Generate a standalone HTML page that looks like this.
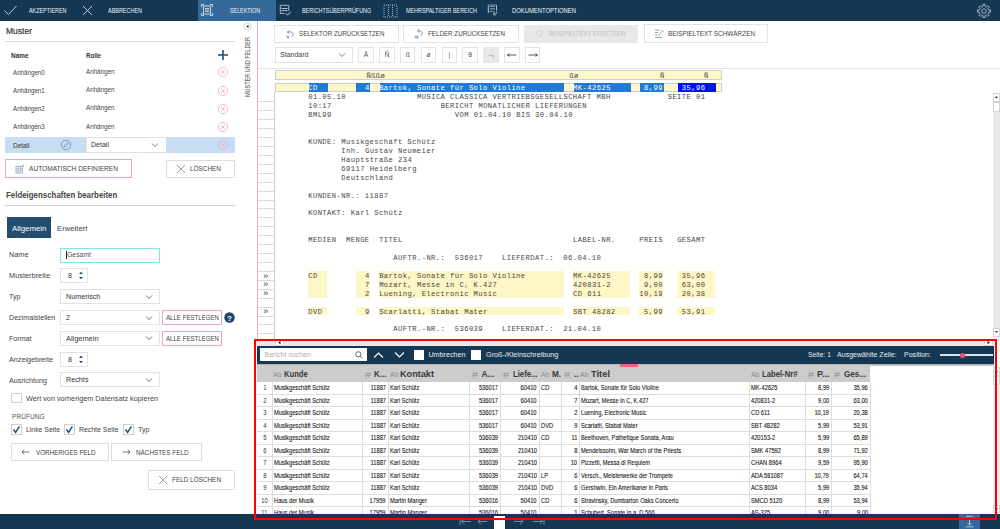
<!DOCTYPE html>
<html><head><meta charset="utf-8"><style>
html,body{margin:0;padding:0}
body{width:1000px;height:529px;overflow:hidden;position:relative;background:#fff;font-family:"Liberation Sans",sans-serif}
.a{position:absolute}
.t{white-space:pre;line-height:12px;height:12px}
.m{white-space:pre;line-height:12px;height:12px;font-family:"Liberation Mono",monospace;font-size:7.200px;letter-spacing:0.410px}
svg{overflow:visible}
</style></head><body>
<div class="a" style="left:0px;top:0px;width:1000px;height:20.5px;background:#143753"></div>
<div class="a" style="left:198px;top:0px;width:78px;height:20.5px;background:#356999"></div>
<svg class="a" style="left:3px;top:4px" width="15" height="12" viewBox="0 0 15 12"><path d="M1.5 6.5 L5.5 10.5 L13.5 2" fill="none" stroke="#d8dde3" stroke-width="0.9"/></svg>
<svg class="a" style="left:82px;top:5px" width="11" height="11" viewBox="0 0 11 11"><path d="M1 1 L10 10 M10 1 L1 10" fill="none" stroke="#d8dde3" stroke-width="0.9"/></svg>
<svg class="a" style="left:200px;top:3px" width="14" height="14" viewBox="0 0 14 14"><path d="M1.5 4 V1.5 H4 M10 1.5 H12.5 V4 M12.5 10 V12.5 H10 M4 12.5 H1.5 V10" fill="none" stroke="#dfe6ee" stroke-width="0.9"/><rect x="3.5" y="3" width="7" height="8" fill="none" stroke="#dfe6ee" stroke-width="0.9"/><path d="M5 5.5 H9 M5 7 H9 M5 8.5 H9" stroke="#dfe6ee" stroke-width="0.8"/></svg>
<svg class="a" style="left:278px;top:3px" width="15" height="14" viewBox="0 0 15 14"><path d="M2.3 2.3 H10.7 V8 M2.3 2.3 V10.5 H6.5" fill="none" stroke="#b9c3ce" stroke-width="0.9"/><path d="M3.5 5.5 H9.5 M3.5 7.6 H9.5" stroke="#c9d1da" stroke-width="0.9"/><path d="M7.5 10.3 L9.3 12.1 L12.8 9" fill="none" stroke="#d5dce4" stroke-width="0.9"/></svg>
<svg class="a" style="left:383px;top:3.5px" width="16" height="14" viewBox="0 0 16 14"><rect x="1" y="1" width="13" height="12" fill="none" stroke="#cfd6de" stroke-width="0.8" stroke-dasharray="1,1"/><path d="M5.5 1 V13 M9.5 1 V13" stroke="#cfd6de" stroke-width="0.8" stroke-dasharray="1,1"/></svg>
<svg class="a" style="left:486px;top:3px" width="14" height="14" viewBox="0 0 14 14"><path d="M2.3 2 V10 M10.5 2 V7.5" fill="none" stroke="#c5ced8" stroke-width="0.9"/><path d="M2.3 2 H10.5" stroke="#7f93a8" stroke-width="0.9"/><path d="M3.8 3.3 H9 M3.8 5.9 H9 M3.8 8.4 H6.5" stroke="#aab6c3" stroke-width="0.9"/><path d="M8 8 V10.5 M10.5 8.5 V10.5" stroke="#c5ced8" stroke-width="0.8"/><circle cx="8.5" cy="11.3" r="1" fill="none" stroke="#c5ced8" stroke-width="0.8"/></svg>
<svg class="a" style="left:976.5px;top:3.5px" width="14" height="14" viewBox="0 0 14 14"><path d="M5.24 2.75 L5.89 2.54 L5.97 0.48 L8.03 0.48 L8.11 2.54 L8.76 2.75 L9.37 3.06 L10.88 1.66 L12.34 3.12 L10.94 4.63 L11.25 5.24 L11.46 5.89 L13.52 5.97 L13.52 8.03 L11.46 8.11 L11.25 8.76 L10.94 9.37 L12.34 10.88 L10.88 12.34 L9.37 10.94 L8.76 11.25 L8.11 11.46 L8.03 13.52 L5.97 13.52 L5.89 11.46 L5.24 11.25 L4.63 10.94 L3.12 12.34 L1.66 10.88 L3.06 9.37 L2.75 8.76 L2.54 8.11 L0.48 8.03 L0.48 5.97 L2.54 5.89 L2.75 5.24 L3.06 4.63 L1.66 3.12 L3.12 1.66 L4.63 3.06 Z" fill="none" stroke="#cdd5de" stroke-width="0.8"/><circle cx="7" cy="7" r="2.2" fill="none" stroke="#cdd5de" stroke-width="0.8"/></svg>
<div class="a" style="left:5px;top:41px;width:230px;height:1px;background:#dcdcdc"></div>
<svg class="a" style="left:217px;top:49px" width="12" height="12" viewBox="0 0 12 12"><path d="M6 1 V11 M1 6 H11" stroke="#234d74" stroke-width="1.6"/></svg>
<svg class="a" style="left:217px;top:66.3px" width="12" height="12" viewBox="0 0 12 12"><circle cx="6" cy="6" r="4.6" fill="none" stroke="#f0a8b0" stroke-width="0.8"/><path d="M4 4 L8 8 M8 4 L4 8" stroke="#f0a8b0" stroke-width="0.8"/></svg>
<svg class="a" style="left:217px;top:84.6px" width="12" height="12" viewBox="0 0 12 12"><circle cx="6" cy="6" r="4.6" fill="none" stroke="#f0a8b0" stroke-width="0.8"/><path d="M4 4 L8 8 M8 4 L4 8" stroke="#f0a8b0" stroke-width="0.8"/></svg>
<svg class="a" style="left:217px;top:102.8px" width="12" height="12" viewBox="0 0 12 12"><circle cx="6" cy="6" r="4.6" fill="none" stroke="#f0a8b0" stroke-width="0.8"/><path d="M4 4 L8 8 M8 4 L4 8" stroke="#f0a8b0" stroke-width="0.8"/></svg>
<svg class="a" style="left:217px;top:121px" width="12" height="12" viewBox="0 0 12 12"><circle cx="6" cy="6" r="4.6" fill="none" stroke="#f0a8b0" stroke-width="0.8"/><path d="M4 4 L8 8 M8 4 L4 8" stroke="#f0a8b0" stroke-width="0.8"/></svg>
<div class="a" style="left:5px;top:137.3px;width:230px;height:15.8px;background:#c7ddf3"></div>
<svg class="a" style="left:60px;top:139px" width="12" height="12" viewBox="0 0 12 12"><circle cx="6" cy="6" r="4.7" fill="none" stroke="#6f8fb0" stroke-width="0.8"/><path d="M3.8 8.2 L4.2 6.8 L7.6 3.4 L8.6 4.4 L5.2 7.8 Z" fill="none" stroke="#6f8fb0" stroke-width="0.7"/></svg>
<div class="a" style="left:85.5px;top:137.3px;width:80.5px;height:15.8px;background:#fff;border:1px solid #e0e0e0;border-right:none;box-sizing:border-box"></div>
<svg class="a" style="left:151px;top:142px" width="8" height="6" viewBox="0 0 8 6"><path d="M1 1.5 L4 4.5 L7 1.5" fill="none" stroke="#555" stroke-width="0.8"/></svg>
<svg class="a" style="left:217px;top:139px" width="12" height="12" viewBox="0 0 12 12"><circle cx="6" cy="6" r="4.6" fill="none" stroke="#f0a8b0" stroke-width="0.8"/><path d="M4 4 L8 8 M8 4 L4 8" stroke="#f0a8b0" stroke-width="0.8"/></svg>
<div class="a" style="left:5px;top:159.3px;width:127px;height:19px;border:1px solid #f3a3b3;box-sizing:border-box;background:#fff"></div>
<svg class="a" style="left:15px;top:164px" width="10" height="10" viewBox="0 0 10 10"><rect x="1" y="2.5" width="6.5" height="6.5" fill="none" stroke="#8ea3ba" stroke-width="0.8"/><path d="M1 4.7 H7.5 M1 6.8 H7.5 M3.2 2.5 V9 M5.3 2.5 V9" stroke="#8ea3ba" stroke-width="0.6"/><path d="M8 0.5 V3 M6.8 1.7 H9.2" stroke="#8ea3ba" stroke-width="0.6"/></svg>
<div class="a" style="left:166px;top:159.5px;width:69px;height:18.8px;border:1px solid #dedede;box-sizing:border-box;background:#fff"></div>
<svg class="a" style="left:176px;top:163.5px" width="10" height="10" viewBox="0 0 10 10"><path d="M1 1 L9 9 M9 1 L1 9" stroke="#888" stroke-width="0.8"/></svg>
<div class="a" style="left:5px;top:205px;width:230px;height:1px;background:#d0d0d0"></div>
<div class="a" style="left:7px;top:217px;width:44px;height:20.8px;background:#224d6f"></div>
<div class="a" style="left:60px;top:247.5px;width:99.5px;height:15px;border:1px solid #80e4f2;box-sizing:border-box;background:#fff"></div>
<div class="a" style="left:66px;top:250.5px;width:0.8px;height:8.5px;background:#222"></div>
<div class="a" style="left:60px;top:268px;width:28.2px;height:15.2px;border:1px solid #e2e2e2;box-sizing:border-box;background:#fff"></div>
<svg class="a" style="left:78px;top:270px" width="6" height="11" viewBox="0 0 6 11"><path d="M1 4 L3 1.8 L5 4 Z M1 7 L3 9.2 L5 7 Z" fill="#1f4d79"/></svg>
<div class="a" style="left:60px;top:289px;width:99.5px;height:15.3px;border:1px solid #e2e2e2;box-sizing:border-box;background:#fff"></div>
<svg class="a" style="left:144.5px;top:293.8px" width="8" height="6" viewBox="0 0 8 6"><path d="M1 1.5 L4 4.5 L7 1.5" fill="none" stroke="#444" stroke-width="0.8"/></svg>
<div class="a" style="left:60px;top:310px;width:99.5px;height:15.3px;border:1px solid #e2e2e2;box-sizing:border-box;background:#fff"></div>
<svg class="a" style="left:144.5px;top:314.8px" width="8" height="6" viewBox="0 0 8 6"><path d="M1 1.5 L4 4.5 L7 1.5" fill="none" stroke="#444" stroke-width="0.8"/></svg>
<div class="a" style="left:60px;top:330.5px;width:99.5px;height:15.3px;border:1px solid #e2e2e2;box-sizing:border-box;background:#fff"></div>
<svg class="a" style="left:144.5px;top:335.3px" width="8" height="6" viewBox="0 0 8 6"><path d="M1 1.5 L4 4.5 L7 1.5" fill="none" stroke="#444" stroke-width="0.8"/></svg>
<div class="a" style="left:60px;top:351.5px;width:28.2px;height:15.2px;border:1px solid #e2e2e2;box-sizing:border-box;background:#fff"></div>
<svg class="a" style="left:78px;top:353.5px" width="6" height="11" viewBox="0 0 6 11"><path d="M1 4 L3 1.8 L5 4 Z M1 7 L3 9.2 L5 7 Z" fill="#1f4d79"/></svg>
<div class="a" style="left:60px;top:372.2px;width:99.5px;height:15.3px;border:1px solid #e2e2e2;box-sizing:border-box;background:#fff"></div>
<svg class="a" style="left:144.5px;top:377.0px" width="8" height="6" viewBox="0 0 8 6"><path d="M1 1.5 L4 4.5 L7 1.5" fill="none" stroke="#444" stroke-width="0.8"/></svg>
<div class="a" style="left:162px;top:310px;width:60px;height:15.2px;border:1px solid #f3a3b3;box-sizing:border-box;background:#fff"></div>
<div class="a" style="left:162px;top:330.8px;width:60px;height:15.2px;border:1px solid #f3a3b3;box-sizing:border-box;background:#fff"></div>
<svg class="a" style="left:223.5px;top:312px" width="11" height="11" viewBox="0 0 11 11"><circle cx="5.5" cy="5.5" r="5.2" fill="#1d466f"/><text x="5.5" y="8.6" text-anchor="middle" font-family="Liberation Sans" font-weight="bold" font-size="8" fill="#fff">?</text></svg>
<div class="a" style="left:11px;top:392.6px;width:10.5px;height:10.5px;border:1px solid #d0d0d0;box-sizing:border-box;background:#fff"></div>
<div class="a" style="left:11px;top:424.3px;width:10.5px;height:10.5px;border:1px solid #d0d0d0;box-sizing:border-box;background:#fff"></div>
<svg class="a" style="left:11px;top:424.3px" width="11" height="11" viewBox="0 0 11 11"><path d="M2.5 5.5 L4.6 8.4 L8.4 2.4" fill="none" stroke="#1f4d79" stroke-width="1.4"/></svg>
<div class="a" style="left:64px;top:424.3px;width:10.5px;height:10.5px;border:1px solid #d0d0d0;box-sizing:border-box;background:#fff"></div>
<svg class="a" style="left:64px;top:424.3px" width="11" height="11" viewBox="0 0 11 11"><path d="M2.5 5.5 L4.6 8.4 L8.4 2.4" fill="none" stroke="#1f4d79" stroke-width="1.4"/></svg>
<div class="a" style="left:123px;top:424.3px;width:10.5px;height:10.5px;border:1px solid #d0d0d0;box-sizing:border-box;background:#fff"></div>
<svg class="a" style="left:123px;top:424.3px" width="11" height="11" viewBox="0 0 11 11"><path d="M2.5 5.5 L4.6 8.4 L8.4 2.4" fill="none" stroke="#1f4d79" stroke-width="1.4"/></svg>
<div class="a" style="left:11.3px;top:443px;width:97.4px;height:18.4px;border:1px solid #dedede;box-sizing:border-box;background:#fff"></div>
<svg class="a" style="left:21px;top:449px" width="9" height="6" viewBox="0 0 9 6"><path d="M8.5 3 H1 M3.2 0.8 L1 3 L3.2 5.2" fill="none" stroke="#555" stroke-width="0.8"/></svg>
<div class="a" style="left:111.3px;top:443px;width:90.5px;height:18.4px;border:1px solid #dedede;box-sizing:border-box;background:#fff"></div>
<svg class="a" style="left:121.5px;top:449px" width="9" height="6" viewBox="0 0 9 6"><path d="M0.5 3 H8 M5.8 0.8 L8 3 L5.8 5.2" fill="none" stroke="#555" stroke-width="0.8"/></svg>
<div class="a" style="left:148.4px;top:470px;width:86.6px;height:19.5px;border:1px solid #dedede;box-sizing:border-box;background:#fff"></div>
<svg class="a" style="left:157.5px;top:475px" width="10" height="10" viewBox="0 0 10 10"><path d="M1 1 L9 9 M9 1 L1 9" stroke="#888" stroke-width="0.8"/></svg>
<svg class="a" style="left:242px;top:21.2px" width="11" height="11" viewBox="0 0 11 11"><circle cx="5.5" cy="5.5" r="3.5" fill="none" stroke="#c8c8c8" stroke-width="0.8"/><path d="M6.5 3.8 L4.2 5.5 L6.5 7.2 Z" fill="#333"/></svg>
<div class="a" style="left:242.8px;top:96.8px;width:72px;height:9px;transform-origin:0 0;transform:rotate(-90deg) scaleX(0.836);font:6.6px/9px 'Liberation Sans';color:#444;white-space:nowrap">MUSTER UND FELDER</div>
<div class="a" style="left:257px;top:21px;width:0.8px;height:318px;background:#f6a9b8"></div>
<div class="a" style="left:258px;top:68px;width:742px;height:1px;background:#e6e6e6"></div>
<div class="a" style="left:274px;top:24.5px;width:124.5px;height:18.3px;border:1px solid #e3e3e3;box-sizing:border-box;background:#fff"></div>
<svg class="a" style="left:285px;top:28.5px" width="10" height="11" viewBox="0 0 10 11"><path d="M2.5 3 H5.8 C8.6 3 9 6.6 6.6 7.6 M4.2 1.3 L2.4 3 L4.2 4.7" fill="none" stroke="#6d8aa8" stroke-width="0.9"/><path d="M1.6 6.6 L4.2 9.2 M4.2 6.6 L1.6 9.2" stroke="#6d8aa8" stroke-width="0.9"/></svg>
<div class="a" style="left:403px;top:24.5px;width:115.5px;height:18.3px;border:1px solid #e3e3e3;box-sizing:border-box;background:#fff"></div>
<svg class="a" style="left:414px;top:28px" width="10" height="11" viewBox="0 0 10 11"><path d="M3.5 3 H5.8 C8.6 3 9 6.6 6.6 7.6 M5.2 1.3 L3.4 3 L5.2 4.7" fill="none" stroke="#6d8aa8" stroke-width="0.9"/><rect x="0.8" y="7.6" width="3.6" height="3" fill="#9fb5ca"/></svg>
<div class="a" style="left:524px;top:24.5px;width:114px;height:18.3px;background:#e8e8e8"></div>
<svg class="a" style="left:534px;top:28px" width="10" height="11" viewBox="0 0 10 11"><circle cx="5" cy="5.5" r="3" fill="none" stroke="#c5c5c5" stroke-width="0.8" stroke-dasharray="2,1"/></svg>
<div class="a" style="left:644px;top:24.3px;width:124px;height:18.5px;border:1px solid #e3e3e3;box-sizing:border-box;background:#fff"></div>
<svg class="a" style="left:654px;top:28px" width="10" height="11" viewBox="0 0 10 11"><path d="M1 2 H6 M1 4.5 H4 M1 7 H3 M1 9.5 H8" stroke="#7f9cba" stroke-width="0.9"/><path d="M4 8 L8.5 3 M7.5 2 L9.5 4" stroke="#7f9cba" stroke-width="0.8"/></svg>
<div class="a" style="left:275px;top:47px;width:77.5px;height:15.6px;border:1px solid #e3e3e3;box-sizing:border-box;background:#fff"></div>
<svg class="a" style="left:338px;top:52.2px" width="8" height="6" viewBox="0 0 8 6"><path d="M1 1.5 L4 4.5 L7 1.5" fill="none" stroke="#555" stroke-width="0.8"/></svg>
<div class="a" style="left:358.3px;top:47px;width:15.5px;height:15.6px;border:1px solid #e3e3e3;box-sizing:border-box;background:#fff"></div>
<div class="a" style="left:379.13px;top:47px;width:15.5px;height:15.6px;border:1px solid #e3e3e3;box-sizing:border-box;background:#fff"></div>
<div class="a" style="left:399.96000000000004px;top:47px;width:15.5px;height:15.6px;border:1px solid #e3e3e3;box-sizing:border-box;background:#fff"></div>
<div class="a" style="left:420.79px;top:47px;width:15.5px;height:15.6px;border:1px solid #e3e3e3;box-sizing:border-box;background:#fff"></div>
<div class="a" style="left:441.62px;top:47px;width:15.5px;height:15.6px;border:1px solid #e3e3e3;box-sizing:border-box;background:#fff"></div>
<div class="a" style="left:462.45px;top:47px;width:15.5px;height:15.6px;border:1px solid #e3e3e3;box-sizing:border-box;background:#fff"></div>
<div class="a" style="left:483.28px;top:47px;width:15.5px;height:15.6px;background:#e8e8e8"></div>
<div class="a" style="left:504.11px;top:47px;width:15.5px;height:15.6px;border:1px solid #e3e3e3;box-sizing:border-box;background:#fff"></div>
<svg class="a" style="left:505.91px;top:52px" width="12" height="6" viewBox="0 0 12 6"><path d="M1.5 3 H10.5 M3.6 1.6 L1.5 3 L3.6 4.4" fill="none" stroke="#333" stroke-width="0.8"/></svg>
<div class="a" style="left:524.94px;top:47px;width:15.5px;height:15.6px;border:1px solid #e3e3e3;box-sizing:border-box;background:#fff"></div>
<svg class="a" style="left:526.74px;top:52px" width="12" height="6" viewBox="0 0 12 6"><path d="M1.5 3 H10.5 M8.4 1.6 L10.5 3 L8.4 4.4" fill="none" stroke="#333" stroke-width="0.8"/></svg>
<div class="a" style="left:275px;top:70.2px;width:446.5px;height:9.8px;background:#fdf7cb;border:1px solid #cfcfcf;box-sizing:border-box"></div>
<div class="a" style="left:275px;top:82.5px;width:446.5px;height:9.8px;background:#fdf7cb;border:1px solid #cfcfcf;box-sizing:border-box"></div>
<div class="a" style="left:274.3px;top:92.3px;width:0.8px;height:247px;background:#cfcfcf"></div>
<div class="a" style="left:258px;top:101.42px;width:16.5px;height:0.8px;background:#d9d9d9"></div>
<div class="a" style="left:258px;top:110.34px;width:16.5px;height:0.8px;background:#d9d9d9"></div>
<div class="a" style="left:258px;top:119.25999999999999px;width:16.5px;height:0.8px;background:#d9d9d9"></div>
<div class="a" style="left:258px;top:128.18px;width:16.5px;height:0.8px;background:#d9d9d9"></div>
<div class="a" style="left:258px;top:137.1px;width:16.5px;height:0.8px;background:#d9d9d9"></div>
<div class="a" style="left:258px;top:146.01999999999998px;width:16.5px;height:0.8px;background:#d9d9d9"></div>
<div class="a" style="left:258px;top:154.94px;width:16.5px;height:0.8px;background:#d9d9d9"></div>
<div class="a" style="left:258px;top:163.86px;width:16.5px;height:0.8px;background:#d9d9d9"></div>
<div class="a" style="left:258px;top:172.78px;width:16.5px;height:0.8px;background:#d9d9d9"></div>
<div class="a" style="left:258px;top:181.7px;width:16.5px;height:0.8px;background:#d9d9d9"></div>
<div class="a" style="left:258px;top:190.62px;width:16.5px;height:0.8px;background:#d9d9d9"></div>
<div class="a" style="left:258px;top:199.54px;width:16.5px;height:0.8px;background:#d9d9d9"></div>
<div class="a" style="left:258px;top:208.45999999999998px;width:16.5px;height:0.8px;background:#d9d9d9"></div>
<div class="a" style="left:258px;top:217.38px;width:16.5px;height:0.8px;background:#d9d9d9"></div>
<div class="a" style="left:258px;top:226.3px;width:16.5px;height:0.8px;background:#d9d9d9"></div>
<div class="a" style="left:258px;top:235.22px;width:16.5px;height:0.8px;background:#d9d9d9"></div>
<div class="a" style="left:258px;top:244.14px;width:16.5px;height:0.8px;background:#d9d9d9"></div>
<div class="a" style="left:258px;top:253.06px;width:16.5px;height:0.8px;background:#d9d9d9"></div>
<div class="a" style="left:258px;top:261.98px;width:16.5px;height:0.8px;background:#d9d9d9"></div>
<div class="a" style="left:258px;top:270.9px;width:16.5px;height:0.8px;background:#d9d9d9"></div>
<div class="a" style="left:258px;top:279.82px;width:16.5px;height:0.8px;background:#d9d9d9"></div>
<div class="a" style="left:258px;top:288.74px;width:16.5px;height:0.8px;background:#d9d9d9"></div>
<div class="a" style="left:258px;top:297.65999999999997px;width:16.5px;height:0.8px;background:#d9d9d9"></div>
<div class="a" style="left:258px;top:306.58px;width:16.5px;height:0.8px;background:#d9d9d9"></div>
<div class="a" style="left:258px;top:315.5px;width:16.5px;height:0.8px;background:#d9d9d9"></div>
<div class="a" style="left:258px;top:324.41999999999996px;width:16.5px;height:0.8px;background:#d9d9d9"></div>
<div class="a" style="left:258px;top:333.34000000000003px;width:16.5px;height:0.8px;background:#d9d9d9"></div>
<div class="a" style="left:308.2px;top:270.9px;width:18.92px;height:26.759999999999998px;background:#fdf6c6"></div>
<div class="a" style="left:355.5px;top:270.9px;width:14.190000000000001px;height:26.759999999999998px;background:#fdf6c6"></div>
<div class="a" style="left:379.15px;top:270.9px;width:184.47000000000003px;height:26.759999999999998px;background:#fdf6c6"></div>
<div class="a" style="left:573.0799999999999px;top:270.9px;width:56.760000000000005px;height:26.759999999999998px;background:#fdf6c6"></div>
<div class="a" style="left:639.3px;top:270.9px;width:23.650000000000002px;height:26.759999999999998px;background:#fdf6c6"></div>
<div class="a" style="left:677.1400000000001px;top:270.9px;width:37.84px;height:26.759999999999998px;background:#fdf6c6"></div>
<div class="a" style="left:308.2px;top:306.58px;width:18.92px;height:8.92px;background:#fdf6c6"></div>
<div class="a" style="left:355.5px;top:306.58px;width:14.190000000000001px;height:8.92px;background:#fdf6c6"></div>
<div class="a" style="left:379.15px;top:306.58px;width:184.47000000000003px;height:8.92px;background:#fdf6c6"></div>
<div class="a" style="left:573.0799999999999px;top:306.58px;width:56.760000000000005px;height:8.92px;background:#fdf6c6"></div>
<div class="a" style="left:639.3px;top:306.58px;width:23.650000000000002px;height:8.92px;background:#fdf6c6"></div>
<div class="a" style="left:677.1400000000001px;top:306.58px;width:37.84px;height:8.92px;background:#fdf6c6"></div>
<div class="a" style="left:308.9px;top:83.3px;width:18.92px;height:8.3px;background:#1f7bd6"></div>
<div class="a" style="left:356.2px;top:83.3px;width:14.190000000000001px;height:8.3px;background:#1f7bd6"></div>
<div class="a" style="left:379.84999999999997px;top:83.3px;width:184.47000000000003px;height:8.3px;background:#1f7bd6"></div>
<div class="a" style="left:573.78px;top:83.3px;width:56.760000000000005px;height:8.3px;background:#1f7bd6"></div>
<div class="a" style="left:640.0px;top:83.3px;width:23.650000000000002px;height:8.3px;background:#1f7bd6"></div>
<div class="a" style="left:677.8400000000001px;top:83.3px;width:37.84px;height:8.3px;background:#0010f8"></div>
<div class="a" style="left:992.5px;top:92.5px;width:7.5px;height:9px;background:#fff;border:1px solid #d5d5d5;box-sizing:border-box"></div>
<svg class="a" style="left:993px;top:93px" width="7" height="8" viewBox="0 0 7 8"><path d="M1.8 5 L3.5 3 L5.2 5 Z" fill="#444"/></svg>
<div class="a" style="left:992.5px;top:102px;width:7.5px;height:9.5px;background:#fff;border:1px solid #d5d5d5;box-sizing:border-box"></div>
<div class="a" style="left:992.5px;top:111.5px;width:7.5px;height:216px;background:#e8e8e8"></div>
<div class="a" style="left:992.5px;top:327.5px;width:7.5px;height:9px;background:#fff;border:1px solid #d5d5d5;box-sizing:border-box"></div>
<svg class="a" style="left:993px;top:328px" width="7" height="8" viewBox="0 0 7 8"><path d="M1.8 3 L3.5 5 L5.2 3 Z" fill="#444"/></svg>
<div class="a" style="left:256px;top:341px;width:739px;height:4.8px;background:#e9e9e9"></div>
<div class="a" style="left:275px;top:338.5px;width:9px;height:7.5px;background:#fff;border:1px solid #d8d8d8;box-sizing:border-box;z-index:6"></div>
<svg class="a" style="left:275px;top:338.5px;z-index:6" width="9" height="7" viewBox="0 0 9 7"><path d="M5.5 1.8 L3.2 3.6 L5.5 5.4 Z" fill="#222"/></svg>
<div class="a" style="left:983.5px;top:338.5px;width:9px;height:7.5px;background:#fff;border:1px solid #d8d8d8;box-sizing:border-box;z-index:6"></div>
<svg class="a" style="left:983.5px;top:338.5px;z-index:6" width="9" height="7" viewBox="0 0 9 7"><path d="M3.5 1.8 L5.8 3.6 L3.5 5.4 Z" fill="#222"/></svg>
<div class="a" style="left:257px;top:345.6px;width:737px;height:18.3px;background:#143753"></div>
<div class="a" style="left:260px;top:348.2px;width:107px;height:12.8px;background:#fff"></div>
<svg class="a" style="left:354px;top:350px" width="10" height="10" viewBox="0 0 10 10"><circle cx="4.3" cy="4.3" r="2.6" fill="none" stroke="#40607f" stroke-width="0.9"/><path d="M6.2 6.2 L8.3 8.3" stroke="#40607f" stroke-width="1"/></svg>
<svg class="a" style="left:373px;top:351px" width="11" height="8" viewBox="0 0 11 8"><path d="M1 6.5 L5.5 2 L10 6.5" fill="none" stroke="#fff" stroke-width="1.1"/></svg>
<svg class="a" style="left:394px;top:351px" width="11" height="8" viewBox="0 0 11 8"><path d="M1 1.5 L5.5 6 L10 1.5" fill="none" stroke="#fff" stroke-width="1.1"/></svg>
<div class="a" style="left:414px;top:350px;width:10px;height:9.8px;background:#fff"></div>
<div class="a" style="left:471px;top:350px;width:10px;height:9.8px;background:#fff"></div>
<div class="a" style="left:940px;top:354.2px;width:53px;height:1.6px;background:#dfe3e7"></div>
<svg class="a" style="left:959px;top:351.5px" width="7" height="7" viewBox="0 0 7 7"><circle cx="3.5" cy="3.5" r="2.6" fill="#f0506e"/></svg>
<div class="a" style="left:620px;top:364px;width:18px;height:3px;background:#f0607a;z-index:3"></div>
<div class="a" style="left:257px;top:364px;width:613.4px;height:17.5px;background:#cccccc"></div>
<div class="a" style="left:257px;top:381.5px;width:737px;height:132.5px;background:#fff"></div>
<div class="a" style="left:870.4px;top:364px;width:124px;height:150px;background:#fff"></div>
<div class="a" style="left:257px;top:364px;width:737px;height:2.3px;background:linear-gradient(#a9aeb3,#d3d3d3)"></div>
<div class="a" style="left:992.8px;top:366.5px;width:7.2px;height:138px;background:#f0f0f0"></div>
<div class="a" style="left:992.8px;top:366.5px;width:7.2px;height:9px;background:#fff;border:1px solid #dadada;box-sizing:border-box"></div>
<svg class="a" style="left:993px;top:367px" width="7" height="8" viewBox="0 0 7 8"><path d="M1.8 5 L3.5 3 L5.2 5 Z" fill="#444"/></svg>
<div class="a" style="left:992.8px;top:375.5px;width:7.2px;height:9.7px;background:#fff;border:1px solid #dadada;box-sizing:border-box"></div>
<div class="a" style="left:257px;top:393.75px;width:613.4px;height:0.8px;background:#dedede"></div>
<div class="a" style="left:257px;top:406.25px;width:613.4px;height:0.8px;background:#dedede"></div>
<div class="a" style="left:257px;top:418.75px;width:613.4px;height:0.8px;background:#dedede"></div>
<div class="a" style="left:257px;top:431.25px;width:613.4px;height:0.8px;background:#dedede"></div>
<div class="a" style="left:257px;top:443.75px;width:613.4px;height:0.8px;background:#dedede"></div>
<div class="a" style="left:257px;top:456.25px;width:613.4px;height:0.8px;background:#dedede"></div>
<div class="a" style="left:257px;top:468.75px;width:613.4px;height:0.8px;background:#dedede"></div>
<div class="a" style="left:257px;top:481.25px;width:613.4px;height:0.8px;background:#dedede"></div>
<div class="a" style="left:257px;top:493.75px;width:613.4px;height:0.8px;background:#dedede"></div>
<div class="a" style="left:257px;top:506.25px;width:613.4px;height:0.8px;background:#dedede"></div>
<div class="a" style="left:257px;top:518.75px;width:613.4px;height:0.8px;background:#dedede"></div>
<div class="a" style="left:272.1px;top:381.75px;width:0.8px;height:132.5px;background:#dedede"></div>
<div class="a" style="left:362.1px;top:381.75px;width:0.8px;height:132.5px;background:#dedede"></div>
<div class="a" style="left:387.90000000000003px;top:381.75px;width:0.8px;height:132.5px;background:#dedede"></div>
<div class="a" style="left:469.1px;top:381.75px;width:0.8px;height:132.5px;background:#dedede"></div>
<div class="a" style="left:500.20000000000005px;top:381.75px;width:0.8px;height:132.5px;background:#dedede"></div>
<div class="a" style="left:539.1px;top:381.75px;width:0.8px;height:132.5px;background:#dedede"></div>
<div class="a" style="left:561.4px;top:381.75px;width:0.8px;height:132.5px;background:#dedede"></div>
<div class="a" style="left:579.3000000000001px;top:381.75px;width:0.8px;height:132.5px;background:#dedede"></div>
<div class="a" style="left:748.9px;top:381.75px;width:0.8px;height:132.5px;background:#dedede"></div>
<div class="a" style="left:804.9px;top:381.75px;width:0.8px;height:132.5px;background:#dedede"></div>
<div class="a" style="left:831.1px;top:381.75px;width:0.8px;height:132.5px;background:#dedede"></div>
<div class="a" style="left:870.0px;top:381.75px;width:0.8px;height:132.5px;background:#dedede"></div>
<div class="a" style="left:0px;top:514px;width:1000px;height:15px;background:#143753;z-index:5"></div>
<div class="a" style="left:959.2px;top:514px;width:20.5px;height:15px;background:#356999;z-index:5"></div>
<svg class="a" style="z-index:6;left:963px;top:515px" width="13" height="13" viewBox="0 0 13 13"><path d="M3 1.3 H10 M6.5 4 V10 M4.5 8 L6.5 10 L8.5 8 M2.5 11.8 H10.5" fill="none" stroke="#c9d6e3" stroke-width="0.8"/></svg>
<svg class="a" style="z-index:6;left:459px;top:516.5px" width="13" height="9" viewBox="0 0 13 9"><path d="M1 1 V8 M2.5 4.5 H12 M5.5 1.8 L2.5 4.5 L5.5 7.2" fill="none" stroke="#8ea2b8" stroke-width="0.8"/></svg>
<svg class="a" style="z-index:6;left:477px;top:516.5px" width="11" height="9" viewBox="0 0 11 9"><path d="M1 4.5 H10 M4 1.8 L1 4.5 L4 7.2" fill="none" stroke="#8ea2b8" stroke-width="0.8"/></svg>
<div class="a" style="left:494px;top:515.5px;width:11px;height:13.5px;background:#fff;z-index:6"></div>
<svg class="a" style="z-index:6;left:513px;top:516.5px" width="11" height="9" viewBox="0 0 11 9"><path d="M1 4.5 H10 M7 1.8 L10 4.5 L7 7.2" fill="none" stroke="#8ea2b8" stroke-width="0.8"/></svg>
<svg class="a" style="z-index:6;left:532px;top:516.5px" width="13" height="9" viewBox="0 0 13 9"><path d="M12 1 V8 M1 4.5 H10.5 M7.5 1.8 L10.5 4.5 L7.5 7.2" fill="none" stroke="#8ea2b8" stroke-width="0.8"/></svg>
<div class="a" style="left:992.7px;top:504.6px;width:7.3px;height:8.6px;background:#fff;border:1px solid #d5d5d5;box-sizing:border-box"></div>
<svg class="a" style="left:993px;top:505px" width="7" height="8" viewBox="0 0 7 8"><path d="M1.8 3 L3.5 5 L5.2 3 Z" fill="#444"/></svg>
<div class="a" style="left:254px;top:339px;width:743px;height:181px;border:2.2px solid #ff0000;box-sizing:border-box;z-index:7"></div>
<div class="a m" style="left:366.38px;top:69.80px;color:#474747">Ñßßø</div>
<div class="a m" style="left:569.30px;top:69.80px;color:#474747">ßø</div>
<div class="a m" style="left:660.11px;top:69.80px;color:#474747">Ñ</div>
<div class="a m" style="left:704.10px;top:69.80px;color:#474747">Ñ</div>
<div class="a m" style="left:308.20px;top:82.10px;color:#fff">CD</div>
<div class="a m" style="left:364.96px;top:82.10px;color:#fff">4</div>
<div class="a m" style="left:379.15px;top:82.10px;color:#fff">Bartok, Sonate für Solo Violine</div>
<div class="a m" style="left:573.08px;top:82.10px;color:#fff">MK-42625</div>
<div class="a m" style="left:644.03px;top:82.10px;color:#fff">8,99</div>
<div class="a m" style="left:681.87px;top:82.10px;color:#fff">35,96</div>
<div class="a m" style="left:308.20px;top:91.46px;color:#474747">01.05.10</div>
<div class="a m" style="left:416.99px;top:91.46px;color:#474747">MUSICA CLASSICA VERTRIEBSGESELLSCHAFT MBH</div>
<div class="a m" style="left:667.68px;top:91.46px;color:#474747">SEITE 01</div>
<div class="a m" style="left:308.20px;top:100.38px;color:#474747">10:17</div>
<div class="a m" style="left:440.64px;top:100.38px;color:#474747">BERICHT MONATLICHER LIEFERUNGEN</div>
<div class="a m" style="left:308.20px;top:109.30px;color:#474747">BML99</div>
<div class="a m" style="left:454.83px;top:109.30px;color:#474747">VOM 01.04.10 BIS 30.04.10</div>
<div class="a m" style="left:308.20px;top:136.06px;color:#474747">KUNDE: Musikgeschäft Schütz</div>
<div class="a m" style="left:341.31px;top:144.98px;color:#474747">Inh. Gustav Neumeier</div>
<div class="a m" style="left:341.31px;top:153.90px;color:#474747">Hauptstraße 234</div>
<div class="a m" style="left:341.31px;top:162.82px;color:#474747">69117 Heidelberg</div>
<div class="a m" style="left:341.31px;top:171.74px;color:#474747">Deutschland</div>
<div class="a m" style="left:308.20px;top:189.58px;color:#474747">KUNDEN-NR.: 11887</div>
<div class="a m" style="left:308.20px;top:207.42px;color:#474747">KONTAKT: Karl Schütz</div>
<div class="a m" style="left:308.20px;top:234.18px;color:#474747">MEDIEN  MENGE  TITEL</div>
<div class="a m" style="left:573.08px;top:234.18px;color:#474747">LABEL-NR.</div>
<div class="a m" style="left:639.30px;top:234.18px;color:#474747">PREIS</div>
<div class="a m" style="left:677.14px;top:234.18px;color:#474747">GESAMT</div>
<div class="a m" style="left:393.34px;top:252.02px;color:#474747">AUFTR.-NR.:  536017    LIEFERDAT.:  06.04.10</div>
<div class="a m" style="left:308.20px;top:269.86px;color:#474747">CD</div>
<div class="a m" style="left:364.96px;top:269.86px;color:#474747">4</div>
<div class="a m" style="left:379.15px;top:269.86px;color:#474747">Bartok, Sonate für Solo Violine</div>
<div class="a m" style="left:573.08px;top:269.86px;color:#474747">MK-42625</div>
<div class="a m" style="left:644.03px;top:269.86px;color:#474747">8,99</div>
<div class="a m" style="left:681.87px;top:269.86px;color:#474747">35,96</div>
<div class="a m" style="left:364.96px;top:278.78px;color:#474747">7</div>
<div class="a m" style="left:379.15px;top:278.78px;color:#474747">Mozart, Messe in C, K.427</div>
<div class="a m" style="left:573.08px;top:278.78px;color:#474747">420831-2</div>
<div class="a m" style="left:644.03px;top:278.78px;color:#474747">9,00</div>
<div class="a m" style="left:681.87px;top:278.78px;color:#474747">63,00</div>
<div class="a m" style="left:364.96px;top:287.70px;color:#474747">2</div>
<div class="a m" style="left:379.15px;top:287.70px;color:#474747">Luening, Electronic Music</div>
<div class="a m" style="left:573.08px;top:287.70px;color:#474747">CD 611</div>
<div class="a m" style="left:639.30px;top:287.70px;color:#474747">10,19</div>
<div class="a m" style="left:681.87px;top:287.70px;color:#474747">20,38</div>
<div class="a m" style="left:308.20px;top:305.54px;color:#474747">DVD</div>
<div class="a m" style="left:364.96px;top:305.54px;color:#474747">9</div>
<div class="a m" style="left:379.15px;top:305.54px;color:#474747">Scarlatti, Stabat Mater</div>
<div class="a m" style="left:573.08px;top:305.54px;color:#474747">SBT 48282</div>
<div class="a m" style="left:644.03px;top:305.54px;color:#474747">5,99</div>
<div class="a m" style="left:681.87px;top:305.54px;color:#474747">53,91</div>
<div class="a m" style="left:393.34px;top:323.38px;color:#474747">AUFTR.-NR.:  536039    LIEFERDAT.:  21.04.10</div>
<div class="a t" style="left:29.20px;top:5.10px;font:normal 7px/12px 'Liberation Sans';color:#f2f5f8;transform:scaleX(0.7712);transform-origin:0 50%;">AKZEPTIEREN</div>
<div class="a t" style="left:108.00px;top:5.10px;font:normal 7px/12px 'Liberation Sans';color:#f2f5f8;transform:scaleX(0.7802);transform-origin:0 50%;">ABBRECHEN</div>
<div class="a t" style="left:230.00px;top:5.10px;font:normal 7px/12px 'Liberation Sans';color:#f2f5f8;transform:scaleX(0.7634);transform-origin:0 50%;">SELEKTION</div>
<div class="a t" style="left:301.50px;top:5.10px;font:normal 7px/12px 'Liberation Sans';color:#f2f5f8;transform:scaleX(0.7736);transform-origin:0 50%;">BERICHTSÜBERPRÜFUNG</div>
<div class="a t" style="left:405.70px;top:5.10px;font:normal 7px/12px 'Liberation Sans';color:#f2f5f8;transform:scaleX(0.7723);transform-origin:0 50%;">MEHRSPALTIGER BEREICH</div>
<div class="a t" style="left:512.40px;top:5.10px;font:normal 7px/12px 'Liberation Sans';color:#f2f5f8;transform:scaleX(0.8366);transform-origin:0 50%;">DOKUMENTOPTIONEN</div>
<div class="a t" style="left:5.50px;top:25.30px;font:normal 8.3px/12px 'Liberation Sans';color:#2e2e2e;transform:scaleX(1.0253);transform-origin:0 50%;-webkit-text-stroke:0.15px #2e2e2e;">Muster</div>
<div class="a t" style="left:10.50px;top:49.80px;font:bold 6.8px/12px 'Liberation Sans';color:#333;transform:scaleX(0.9451);transform-origin:0 50%;">Name</div>
<div class="a t" style="left:85.50px;top:49.80px;font:bold 6.8px/12px 'Liberation Sans';color:#333;transform:scaleX(0.9023);transform-origin:0 50%;">Rolle</div>
<div class="a t" style="left:13.00px;top:67.00px;font:normal 6.5px/12px 'Liberation Sans';color:#444;transform:scaleX(0.9544);transform-origin:0 50%;">Anhängen0</div>
<div class="a t" style="left:85.50px;top:66.20px;font:normal 6.5px/12px 'Liberation Sans';color:#444;transform:scaleX(0.9615);transform-origin:0 50%;">Anhängen</div>
<div class="a t" style="left:13.00px;top:85.00px;font:normal 6.5px/12px 'Liberation Sans';color:#444;transform:scaleX(0.9544);transform-origin:0 50%;">Anhängen1</div>
<div class="a t" style="left:85.50px;top:84.20px;font:normal 6.5px/12px 'Liberation Sans';color:#444;transform:scaleX(0.9615);transform-origin:0 50%;">Anhängen</div>
<div class="a t" style="left:13.00px;top:103.20px;font:normal 6.5px/12px 'Liberation Sans';color:#444;transform:scaleX(0.9544);transform-origin:0 50%;">Anhängen2</div>
<div class="a t" style="left:85.50px;top:102.40px;font:normal 6.5px/12px 'Liberation Sans';color:#444;transform:scaleX(0.9615);transform-origin:0 50%;">Anhängen</div>
<div class="a t" style="left:13.00px;top:121.30px;font:normal 6.5px/12px 'Liberation Sans';color:#444;transform:scaleX(0.9544);transform-origin:0 50%;">Anhängen3</div>
<div class="a t" style="left:85.50px;top:120.50px;font:normal 6.5px/12px 'Liberation Sans';color:#444;transform:scaleX(0.9615);transform-origin:0 50%;">Anhängen</div>
<div class="a t" style="left:13.00px;top:139.80px;font:normal 6.8px/12px 'Liberation Sans';color:#333;transform:scaleX(0.9488);transform-origin:0 50%;">Detail</div>
<div class="a t" style="left:91.00px;top:139.10px;font:normal 7.2px/12px 'Liberation Sans';color:#333;transform:scaleX(0.9788);transform-origin:0 50%;">Detail</div>
<div class="a t" style="left:29.25px;top:162.80px;font:normal 7px/12px 'Liberation Sans';color:#444;transform:scaleX(0.9404);transform-origin:0 50%;">AUTOMATISCH DEFINIEREN</div>
<div class="a t" style="left:190.00px;top:162.80px;font:normal 7px/12px 'Liberation Sans';color:#444;transform:scaleX(0.9160);transform-origin:0 50%;">LÖSCHEN</div>
<div class="a t" style="left:5.50px;top:189.20px;font:bold 9.2px/12px 'Liberation Sans';color:#484848;transform:scaleX(0.8582);transform-origin:0 50%;">Feldeigenschaften bearbeiten</div>
<div class="a t" style="left:11.50px;top:222.50px;font:normal 7.8px/12px 'Liberation Sans';color:#fff;transform:scaleX(1.0073);transform-origin:0 50%;">Allgemein</div>
<div class="a t" style="left:56.50px;top:222.50px;font:normal 7.8px/12px 'Liberation Sans';color:#444;transform:scaleX(0.9914);transform-origin:0 50%;">Erweitert</div>
<div class="a t" style="left:9.00px;top:249.00px;font:normal 7.2px/12px 'Liberation Sans';color:#444;transform:scaleX(1.0163);transform-origin:0 50%;">Name</div>
<div class="a t" style="left:9.00px;top:270.10px;font:normal 7.2px/12px 'Liberation Sans';color:#444;transform:scaleX(1.0262);transform-origin:0 50%;">Musterbreite</div>
<div class="a t" style="left:9.00px;top:291.00px;font:normal 7.2px/12px 'Liberation Sans';color:#444;transform:scaleX(0.9919);transform-origin:0 50%;">Typ</div>
<div class="a t" style="left:9.00px;top:312.10px;font:normal 7.2px/12px 'Liberation Sans';color:#444;transform:scaleX(0.9904);transform-origin:0 50%;">Dezimalstellen</div>
<div class="a t" style="left:9.00px;top:332.50px;font:normal 7.2px/12px 'Liberation Sans';color:#444;transform:scaleX(0.9883);transform-origin:0 50%;">Format</div>
<div class="a t" style="left:9.00px;top:353.50px;font:normal 7.2px/12px 'Liberation Sans';color:#444;">Anzeigebreite</div>
<div class="a t" style="left:9.00px;top:374.50px;font:normal 7.2px/12px 'Liberation Sans';color:#444;">Ausrichtung</div>
<div class="a t" style="left:66.50px;top:249.10px;font:normal 7.2px/12px 'Liberation Sans';color:#555;transform:scaleX(0.9534);transform-origin:0 50%;">Gesamt</div>
<div class="a t" style="left:68.00px;top:270.10px;font:normal 7.2px/12px 'Liberation Sans';color:#333;">8</div>
<div class="a t" style="left:66.00px;top:291.10px;font:normal 7.2px/12px 'Liberation Sans';color:#333;">Numerisch</div>
<div class="a t" style="left:66.00px;top:312.10px;font:normal 7.2px/12px 'Liberation Sans';color:#333;">2</div>
<div class="a t" style="left:66.00px;top:332.60px;font:normal 7.2px/12px 'Liberation Sans';color:#333;transform:scaleX(1.0297);transform-origin:0 50%;">Allgemein</div>
<div class="a t" style="left:68.00px;top:353.60px;font:normal 7.2px/12px 'Liberation Sans';color:#333;">8</div>
<div class="a t" style="left:66.00px;top:374.30px;font:normal 7.2px/12px 'Liberation Sans';color:#333;transform:scaleX(1.0056);transform-origin:0 50%;">Rechts</div>
<div class="a t" style="left:165.50px;top:312.10px;font:normal 7px/12px 'Liberation Sans';color:#444;transform:scaleX(0.8731);transform-origin:0 50%;">ALLE FESTLEGEN</div>
<div class="a t" style="left:165.50px;top:332.90px;font:normal 7px/12px 'Liberation Sans';color:#444;transform:scaleX(0.8731);transform-origin:0 50%;">ALLE FESTLEGEN</div>
<div class="a t" style="left:26.00px;top:392.50px;font:normal 7.2px/12px 'Liberation Sans';color:#444;transform:scaleX(1.0114);transform-origin:0 50%;">Wert von vorherigem Datensatz kopieren</div>
<div class="a t" style="left:11.50px;top:411.00px;font:normal 6.8px/12px 'Liberation Sans';color:#555;transform:scaleX(0.9670);transform-origin:0 50%;">PRÜFUNG</div>
<div class="a t" style="left:26.00px;top:424.10px;font:normal 7.2px/12px 'Liberation Sans';color:#444;transform:scaleX(0.9561);transform-origin:0 50%;">Linke Seite</div>
<div class="a t" style="left:79.00px;top:424.10px;font:normal 7.2px/12px 'Liberation Sans';color:#444;transform:scaleX(0.9598);transform-origin:0 50%;">Rechte Seite</div>
<div class="a t" style="left:138.00px;top:424.10px;font:normal 7.2px/12px 'Liberation Sans';color:#444;transform:scaleX(0.9919);transform-origin:0 50%;">Typ</div>
<div class="a t" style="left:35.50px;top:446.70px;font:normal 7px/12px 'Liberation Sans';color:#444;transform:scaleX(0.8945);transform-origin:0 50%;">VORHERIGES FELD</div>
<div class="a t" style="left:135.50px;top:446.70px;font:normal 7px/12px 'Liberation Sans';color:#444;transform:scaleX(0.9057);transform-origin:0 50%;">NÄCHSTES FELD</div>
<div class="a t" style="left:172.00px;top:474.30px;font:normal 7px/12px 'Liberation Sans';color:#444;transform:scaleX(0.9127);transform-origin:0 50%;">FELD LÖSCHEN</div>
<div class="a t" style="left:299.00px;top:27.90px;font:normal 7.7px/12px 'Liberation Sans';color:#444;transform:scaleX(0.8114);transform-origin:0 50%;">SELEKTOR ZURÜCKSETZEN</div>
<div class="a t" style="left:428.00px;top:27.90px;font:normal 7.7px/12px 'Liberation Sans';color:#444;transform:scaleX(0.8120);transform-origin:0 50%;">FELDER ZURÜCKSETZEN</div>
<div class="a t" style="left:548.50px;top:27.90px;font:normal 7.7px/12px 'Liberation Sans';color:#c0c0c0;transform:scaleX(0.7947);transform-origin:0 50%;">BEISPIELTEXT ERSETZEN</div>
<div class="a t" style="left:667.50px;top:27.90px;font:normal 7.7px/12px 'Liberation Sans';color:#444;transform:scaleX(0.8301);transform-origin:0 50%;">BEISPIELTEXT SCHWÄRZEN</div>
<div class="a t" style="left:280.00px;top:49.10px;font:normal 7.4px/12px 'Liberation Sans';color:#444;transform:scaleX(0.9500);transform-origin:0 50%;">Standard</div>
<div class="a t" style="left:363.78px;top:49.10px;font:normal 6.8px/12px 'Liberation Sans';color:#555;">Ā</div>
<div class="a t" style="left:384.42px;top:49.10px;font:normal 6.8px/12px 'Liberation Sans';color:#555;">Ñ</div>
<div class="a t" style="left:405.63px;top:49.10px;font:normal 6.8px/12px 'Liberation Sans';color:#555;">ß</div>
<div class="a t" style="left:426.46px;top:49.10px;font:normal 6.8px/12px 'Liberation Sans';color:#555;">ø</div>
<div class="a t" style="left:448.49px;top:49.10px;font:normal 6.8px/12px 'Liberation Sans';color:#555;">|</div>
<div class="a t" style="left:468.31px;top:49.10px;font:normal 6.8px/12px 'Liberation Sans';color:#555;">θ</div>
<div class="a t" style="left:488.40px;top:50.00px;font:normal 9px/12px 'Liberation Sans';color:#999;">¬</div>
<div class="a t" style="left:263.20px;top:269.56px;font:normal 9px/12px 'Liberation Sans';color:#444;">»</div>
<div class="a t" style="left:263.20px;top:278.48px;font:normal 9px/12px 'Liberation Sans';color:#444;">»</div>
<div class="a t" style="left:263.20px;top:287.40px;font:normal 9px/12px 'Liberation Sans';color:#444;">»</div>
<div class="a t" style="left:263.20px;top:305.24px;font:normal 9px/12px 'Liberation Sans';color:#444;">»</div>
<div class="a t" style="left:264.50px;top:349.10px;font:normal 7px/12px 'Liberation Sans';color:#b0b0b0;">Bericht suchen</div>
<div class="a t" style="left:428.40px;top:349.30px;font:normal 7.2px/12px 'Liberation Sans';color:#e8edf2;">Umbrechen</div>
<div class="a t" style="left:485.60px;top:349.30px;font:normal 7.2px/12px 'Liberation Sans';color:#e8edf2;transform:scaleX(1.0066);transform-origin:0 50%;">Groß-/Kleinschreibung</div>
<div class="a t" style="left:808.40px;top:349.30px;font:normal 7.2px/12px 'Liberation Sans';color:#e8edf2;transform:scaleX(0.9436);transform-origin:0 50%;">Seite: 1</div>
<div class="a t" style="left:837.40px;top:349.30px;font:normal 7.2px/12px 'Liberation Sans';color:#e8edf2;transform:scaleX(0.9813);transform-origin:0 50%;">Ausgewählte Zeile:</div>
<div class="a t" style="left:904.00px;top:349.30px;font:normal 7.2px/12px 'Liberation Sans';color:#e8edf2;transform:scaleX(0.9790);transform-origin:0 50%;">Position:</div>
<div class="a t" style="left:273.00px;top:368.60px;font:normal 7.4px/12px 'Liberation Sans';color:#8c8c8c;transform:scaleX(0.9396);transform-origin:0 50%;">Ab</div>
<div class="a t" style="left:284.10px;top:368.40px;font:bold 8.4px/12px 'Liberation Sans';color:#3a3a3a;transform:scaleX(0.9094);transform-origin:0 50%;">Kunde</div>
<div class="a t" style="left:364.50px;top:368.60px;font:normal 9px/12px 'Liberation Sans';color:#8c8c8c;transform:scaleX(1.1963);transform-origin:0 50%;">#</div>
<div class="a t" style="left:374.00px;top:368.40px;font:bold 8.4px/12px 'Liberation Sans';color:#3a3a3a;transform:scaleX(0.9592);transform-origin:0 50%;">K...</div>
<div class="a t" style="left:389.50px;top:368.60px;font:normal 7.4px/12px 'Liberation Sans';color:#8c8c8c;transform:scaleX(0.9396);transform-origin:0 50%;">Ab</div>
<div class="a t" style="left:400.00px;top:368.40px;font:bold 8.4px/12px 'Liberation Sans';color:#3a3a3a;transform:scaleX(1.0902);transform-origin:0 50%;">Kontakt</div>
<div class="a t" style="left:472.10px;top:368.60px;font:normal 9px/12px 'Liberation Sans';color:#8c8c8c;transform:scaleX(1.1963);transform-origin:0 50%;">#</div>
<div class="a t" style="left:481.50px;top:368.40px;font:bold 8.4px/12px 'Liberation Sans';color:#3a3a3a;">A...</div>
<div class="a t" style="left:502.90px;top:368.60px;font:normal 9px/12px 'Liberation Sans';color:#8c8c8c;transform:scaleX(1.1963);transform-origin:0 50%;">#</div>
<div class="a t" style="left:512.50px;top:368.40px;font:bold 8.4px/12px 'Liberation Sans';color:#3a3a3a;transform:scaleX(0.9234);transform-origin:0 50%;">Liefe...</div>
<div class="a t" style="left:541.00px;top:368.60px;font:normal 7.4px/12px 'Liberation Sans';color:#8c8c8c;transform:scaleX(0.9396);transform-origin:0 50%;">Ab</div>
<div class="a t" style="left:551.50px;top:368.40px;font:bold 8.4px/12px 'Liberation Sans';color:#3a3a3a;transform:scaleX(0.9664);transform-origin:0 50%;">M.</div>
<div class="a t" style="left:563.80px;top:368.60px;font:normal 9px/12px 'Liberation Sans';color:#8c8c8c;transform:scaleX(1.1963);transform-origin:0 50%;">#</div>
<div class="a t" style="left:573.50px;top:368.40px;font:bold 8.4px/12px 'Liberation Sans';color:#3a3a3a;transform:scaleX(0.9664);transform-origin:0 50%;">..</div>
<div class="a t" style="left:580.40px;top:368.60px;font:normal 7.4px/12px 'Liberation Sans';color:#8c8c8c;transform:scaleX(0.9396);transform-origin:0 50%;">Ab</div>
<div class="a t" style="left:591.00px;top:368.40px;font:bold 8.4px/12px 'Liberation Sans';color:#3a3a3a;transform:scaleX(1.1125);transform-origin:0 50%;">Titel</div>
<div class="a t" style="left:750.50px;top:368.60px;font:normal 7.4px/12px 'Liberation Sans';color:#8c8c8c;transform:scaleX(0.9396);transform-origin:0 50%;">Ab</div>
<div class="a t" style="left:761.50px;top:368.40px;font:bold 8.4px/12px 'Liberation Sans';color:#3a3a3a;transform:scaleX(0.9187);transform-origin:0 50%;">Label-Nr#</div>
<div class="a t" style="left:807.50px;top:368.60px;font:normal 9px/12px 'Liberation Sans';color:#8c8c8c;transform:scaleX(1.1963);transform-origin:0 50%;">#</div>
<div class="a t" style="left:817.00px;top:368.40px;font:bold 8.4px/12px 'Liberation Sans';color:#3a3a3a;transform:scaleX(1.0870);transform-origin:0 50%;">P...</div>
<div class="a t" style="left:833.50px;top:368.60px;font:normal 9px/12px 'Liberation Sans';color:#8c8c8c;transform:scaleX(1.1963);transform-origin:0 50%;">#</div>
<div class="a t" style="left:843.50px;top:368.40px;font:bold 8.4px/12px 'Liberation Sans';color:#3a3a3a;transform:scaleX(0.9644);transform-origin:0 50%;">Ges...</div>
<div class="a t" style="left:262.79px;top:382.00px;font:normal 6.5px/12px 'Liberation Sans';color:#333;transform:scaleX(0.9000);transform-origin:50% 50%;">1</div>
<div class="a t" style="left:274.20px;top:382.00px;font:normal 6.3px/12px 'Liberation Sans';color:#111;transform:scaleX(0.9100);transform-origin:0 50%;-webkit-text-stroke:0.08px #111;">Musikgeschäft Schütz</div>
<div class="a t" style="left:368.75px;top:382.00px;font:normal 6.3px/12px 'Liberation Sans';color:#111;transform:scaleX(0.9100);transform-origin:100% 50%;-webkit-text-stroke:0.08px #111;">11887</div>
<div class="a t" style="left:390.00px;top:382.00px;font:normal 6.3px/12px 'Liberation Sans';color:#111;transform:scaleX(0.9100);transform-origin:0 50%;-webkit-text-stroke:0.08px #111;">Karl Schütz</div>
<div class="a t" style="left:477.08px;top:382.00px;font:normal 6.3px/12px 'Liberation Sans';color:#111;transform:scaleX(0.9100);transform-origin:100% 50%;-webkit-text-stroke:0.08px #111;">536017</div>
<div class="a t" style="left:519.48px;top:382.00px;font:normal 6.3px/12px 'Liberation Sans';color:#111;transform:scaleX(0.9100);transform-origin:100% 50%;-webkit-text-stroke:0.08px #111;">60410</div>
<div class="a t" style="left:541.20px;top:382.00px;font:normal 6.3px/12px 'Liberation Sans';color:#111;transform:scaleX(0.9100);transform-origin:0 50%;-webkit-text-stroke:0.08px #111;">CD</div>
<div class="a t" style="left:573.68px;top:382.00px;font:normal 6.3px/12px 'Liberation Sans';color:#111;transform:scaleX(0.9100);transform-origin:100% 50%;-webkit-text-stroke:0.08px #111;">4</div>
<div class="a t" style="left:581.40px;top:382.00px;font:normal 6.3px/12px 'Liberation Sans';color:#111;transform:scaleX(0.9100);transform-origin:0 50%;-webkit-text-stroke:0.08px #111;">Bartok, Sonate für Solo Violine</div>
<div class="a t" style="left:751.00px;top:382.00px;font:normal 6.3px/12px 'Liberation Sans';color:#111;transform:scaleX(0.9100);transform-origin:0 50%;-webkit-text-stroke:0.08px #111;">MK-42625</div>
<div class="a t" style="left:816.73px;top:382.00px;font:normal 6.3px/12px 'Liberation Sans';color:#111;transform:scaleX(0.9100);transform-origin:100% 50%;-webkit-text-stroke:0.08px #111;">8,99</div>
<div class="a t" style="left:852.13px;top:382.00px;font:normal 6.3px/12px 'Liberation Sans';color:#111;transform:scaleX(0.9100);transform-origin:100% 50%;-webkit-text-stroke:0.08px #111;">35,96</div>
<div class="a t" style="left:262.79px;top:394.50px;font:normal 6.5px/12px 'Liberation Sans';color:#333;transform:scaleX(0.9000);transform-origin:50% 50%;">2</div>
<div class="a t" style="left:274.20px;top:394.50px;font:normal 6.3px/12px 'Liberation Sans';color:#111;transform:scaleX(0.9100);transform-origin:0 50%;-webkit-text-stroke:0.08px #111;">Musikgeschäft Schütz</div>
<div class="a t" style="left:368.75px;top:394.50px;font:normal 6.3px/12px 'Liberation Sans';color:#111;transform:scaleX(0.9100);transform-origin:100% 50%;-webkit-text-stroke:0.08px #111;">11887</div>
<div class="a t" style="left:390.00px;top:394.50px;font:normal 6.3px/12px 'Liberation Sans';color:#111;transform:scaleX(0.9100);transform-origin:0 50%;-webkit-text-stroke:0.08px #111;">Karl Schütz</div>
<div class="a t" style="left:477.08px;top:394.50px;font:normal 6.3px/12px 'Liberation Sans';color:#111;transform:scaleX(0.9100);transform-origin:100% 50%;-webkit-text-stroke:0.08px #111;">536017</div>
<div class="a t" style="left:519.48px;top:394.50px;font:normal 6.3px/12px 'Liberation Sans';color:#111;transform:scaleX(0.9100);transform-origin:100% 50%;-webkit-text-stroke:0.08px #111;">60410</div>
<div class="a t" style="left:573.68px;top:394.50px;font:normal 6.3px/12px 'Liberation Sans';color:#111;transform:scaleX(0.9100);transform-origin:100% 50%;-webkit-text-stroke:0.08px #111;">7</div>
<div class="a t" style="left:581.40px;top:394.50px;font:normal 6.3px/12px 'Liberation Sans';color:#111;transform:scaleX(0.9100);transform-origin:0 50%;-webkit-text-stroke:0.08px #111;">Mozart, Messe in C, K.427</div>
<div class="a t" style="left:751.00px;top:394.50px;font:normal 6.3px/12px 'Liberation Sans';color:#111;transform:scaleX(0.9100);transform-origin:0 50%;-webkit-text-stroke:0.08px #111;">420831-2</div>
<div class="a t" style="left:816.73px;top:394.50px;font:normal 6.3px/12px 'Liberation Sans';color:#111;transform:scaleX(0.9100);transform-origin:100% 50%;-webkit-text-stroke:0.08px #111;">9,00</div>
<div class="a t" style="left:852.13px;top:394.50px;font:normal 6.3px/12px 'Liberation Sans';color:#111;transform:scaleX(0.9100);transform-origin:100% 50%;-webkit-text-stroke:0.08px #111;">63,00</div>
<div class="a t" style="left:262.79px;top:407.00px;font:normal 6.5px/12px 'Liberation Sans';color:#333;transform:scaleX(0.9000);transform-origin:50% 50%;">3</div>
<div class="a t" style="left:274.20px;top:407.00px;font:normal 6.3px/12px 'Liberation Sans';color:#111;transform:scaleX(0.9100);transform-origin:0 50%;-webkit-text-stroke:0.08px #111;">Musikgeschäft Schütz</div>
<div class="a t" style="left:368.75px;top:407.00px;font:normal 6.3px/12px 'Liberation Sans';color:#111;transform:scaleX(0.9100);transform-origin:100% 50%;-webkit-text-stroke:0.08px #111;">11887</div>
<div class="a t" style="left:390.00px;top:407.00px;font:normal 6.3px/12px 'Liberation Sans';color:#111;transform:scaleX(0.9100);transform-origin:0 50%;-webkit-text-stroke:0.08px #111;">Karl Schütz</div>
<div class="a t" style="left:477.08px;top:407.00px;font:normal 6.3px/12px 'Liberation Sans';color:#111;transform:scaleX(0.9100);transform-origin:100% 50%;-webkit-text-stroke:0.08px #111;">536017</div>
<div class="a t" style="left:519.48px;top:407.00px;font:normal 6.3px/12px 'Liberation Sans';color:#111;transform:scaleX(0.9100);transform-origin:100% 50%;-webkit-text-stroke:0.08px #111;">60410</div>
<div class="a t" style="left:573.68px;top:407.00px;font:normal 6.3px/12px 'Liberation Sans';color:#111;transform:scaleX(0.9100);transform-origin:100% 50%;-webkit-text-stroke:0.08px #111;">2</div>
<div class="a t" style="left:581.40px;top:407.00px;font:normal 6.3px/12px 'Liberation Sans';color:#111;transform:scaleX(0.9100);transform-origin:0 50%;-webkit-text-stroke:0.08px #111;">Luening, Electronic Music</div>
<div class="a t" style="left:751.00px;top:407.00px;font:normal 6.3px/12px 'Liberation Sans';color:#111;transform:scaleX(0.9100);transform-origin:0 50%;-webkit-text-stroke:0.08px #111;">CD 611</div>
<div class="a t" style="left:813.23px;top:407.00px;font:normal 6.3px/12px 'Liberation Sans';color:#111;transform:scaleX(0.9100);transform-origin:100% 50%;-webkit-text-stroke:0.08px #111;">10,19</div>
<div class="a t" style="left:852.13px;top:407.00px;font:normal 6.3px/12px 'Liberation Sans';color:#111;transform:scaleX(0.9100);transform-origin:100% 50%;-webkit-text-stroke:0.08px #111;">20,38</div>
<div class="a t" style="left:262.79px;top:419.50px;font:normal 6.5px/12px 'Liberation Sans';color:#333;transform:scaleX(0.9000);transform-origin:50% 50%;">4</div>
<div class="a t" style="left:274.20px;top:419.50px;font:normal 6.3px/12px 'Liberation Sans';color:#111;transform:scaleX(0.9100);transform-origin:0 50%;-webkit-text-stroke:0.08px #111;">Musikgeschäft Schütz</div>
<div class="a t" style="left:368.75px;top:419.50px;font:normal 6.3px/12px 'Liberation Sans';color:#111;transform:scaleX(0.9100);transform-origin:100% 50%;-webkit-text-stroke:0.08px #111;">11887</div>
<div class="a t" style="left:390.00px;top:419.50px;font:normal 6.3px/12px 'Liberation Sans';color:#111;transform:scaleX(0.9100);transform-origin:0 50%;-webkit-text-stroke:0.08px #111;">Karl Schütz</div>
<div class="a t" style="left:477.08px;top:419.50px;font:normal 6.3px/12px 'Liberation Sans';color:#111;transform:scaleX(0.9100);transform-origin:100% 50%;-webkit-text-stroke:0.08px #111;">536017</div>
<div class="a t" style="left:519.48px;top:419.50px;font:normal 6.3px/12px 'Liberation Sans';color:#111;transform:scaleX(0.9100);transform-origin:100% 50%;-webkit-text-stroke:0.08px #111;">60410</div>
<div class="a t" style="left:541.20px;top:419.50px;font:normal 6.3px/12px 'Liberation Sans';color:#111;transform:scaleX(0.9100);transform-origin:0 50%;-webkit-text-stroke:0.08px #111;">DVD</div>
<div class="a t" style="left:573.68px;top:419.50px;font:normal 6.3px/12px 'Liberation Sans';color:#111;transform:scaleX(0.9100);transform-origin:100% 50%;-webkit-text-stroke:0.08px #111;">9</div>
<div class="a t" style="left:581.40px;top:419.50px;font:normal 6.3px/12px 'Liberation Sans';color:#111;transform:scaleX(0.9100);transform-origin:0 50%;-webkit-text-stroke:0.08px #111;">Scarlatti, Stabat Mater</div>
<div class="a t" style="left:751.00px;top:419.50px;font:normal 6.3px/12px 'Liberation Sans';color:#111;transform:scaleX(0.9100);transform-origin:0 50%;-webkit-text-stroke:0.08px #111;">SBT 48282</div>
<div class="a t" style="left:816.73px;top:419.50px;font:normal 6.3px/12px 'Liberation Sans';color:#111;transform:scaleX(0.9100);transform-origin:100% 50%;-webkit-text-stroke:0.08px #111;">5,99</div>
<div class="a t" style="left:852.13px;top:419.50px;font:normal 6.3px/12px 'Liberation Sans';color:#111;transform:scaleX(0.9100);transform-origin:100% 50%;-webkit-text-stroke:0.08px #111;">53,91</div>
<div class="a t" style="left:262.79px;top:432.00px;font:normal 6.5px/12px 'Liberation Sans';color:#333;transform:scaleX(0.9000);transform-origin:50% 50%;">5</div>
<div class="a t" style="left:274.20px;top:432.00px;font:normal 6.3px/12px 'Liberation Sans';color:#111;transform:scaleX(0.9100);transform-origin:0 50%;-webkit-text-stroke:0.08px #111;">Musikgeschäft Schütz</div>
<div class="a t" style="left:368.75px;top:432.00px;font:normal 6.3px/12px 'Liberation Sans';color:#111;transform:scaleX(0.9100);transform-origin:100% 50%;-webkit-text-stroke:0.08px #111;">11887</div>
<div class="a t" style="left:390.00px;top:432.00px;font:normal 6.3px/12px 'Liberation Sans';color:#111;transform:scaleX(0.9100);transform-origin:0 50%;-webkit-text-stroke:0.08px #111;">Karl Schütz</div>
<div class="a t" style="left:477.08px;top:432.00px;font:normal 6.3px/12px 'Liberation Sans';color:#111;transform:scaleX(0.9100);transform-origin:100% 50%;-webkit-text-stroke:0.08px #111;">536039</div>
<div class="a t" style="left:515.98px;top:432.00px;font:normal 6.3px/12px 'Liberation Sans';color:#111;transform:scaleX(0.9100);transform-origin:100% 50%;-webkit-text-stroke:0.08px #111;">210410</div>
<div class="a t" style="left:541.20px;top:432.00px;font:normal 6.3px/12px 'Liberation Sans';color:#111;transform:scaleX(0.9100);transform-origin:0 50%;-webkit-text-stroke:0.08px #111;">CD</div>
<div class="a t" style="left:570.65px;top:432.00px;font:normal 6.3px/12px 'Liberation Sans';color:#111;transform:scaleX(0.9100);transform-origin:100% 50%;-webkit-text-stroke:0.08px #111;">11</div>
<div class="a t" style="left:581.40px;top:432.00px;font:normal 6.3px/12px 'Liberation Sans';color:#111;transform:scaleX(0.9100);transform-origin:0 50%;-webkit-text-stroke:0.08px #111;">Beethoven, Pathetique Sonata, Arau</div>
<div class="a t" style="left:751.00px;top:432.00px;font:normal 6.3px/12px 'Liberation Sans';color:#111;transform:scaleX(0.9100);transform-origin:0 50%;-webkit-text-stroke:0.08px #111;">420153-2</div>
<div class="a t" style="left:816.73px;top:432.00px;font:normal 6.3px/12px 'Liberation Sans';color:#111;transform:scaleX(0.9100);transform-origin:100% 50%;-webkit-text-stroke:0.08px #111;">5,99</div>
<div class="a t" style="left:852.13px;top:432.00px;font:normal 6.3px/12px 'Liberation Sans';color:#111;transform:scaleX(0.9100);transform-origin:100% 50%;-webkit-text-stroke:0.08px #111;">65,89</div>
<div class="a t" style="left:262.79px;top:444.50px;font:normal 6.5px/12px 'Liberation Sans';color:#333;transform:scaleX(0.9000);transform-origin:50% 50%;">6</div>
<div class="a t" style="left:274.20px;top:444.50px;font:normal 6.3px/12px 'Liberation Sans';color:#111;transform:scaleX(0.9100);transform-origin:0 50%;-webkit-text-stroke:0.08px #111;">Musikgeschäft Schütz</div>
<div class="a t" style="left:368.75px;top:444.50px;font:normal 6.3px/12px 'Liberation Sans';color:#111;transform:scaleX(0.9100);transform-origin:100% 50%;-webkit-text-stroke:0.08px #111;">11887</div>
<div class="a t" style="left:390.00px;top:444.50px;font:normal 6.3px/12px 'Liberation Sans';color:#111;transform:scaleX(0.9100);transform-origin:0 50%;-webkit-text-stroke:0.08px #111;">Karl Schütz</div>
<div class="a t" style="left:477.08px;top:444.50px;font:normal 6.3px/12px 'Liberation Sans';color:#111;transform:scaleX(0.9100);transform-origin:100% 50%;-webkit-text-stroke:0.08px #111;">536039</div>
<div class="a t" style="left:515.98px;top:444.50px;font:normal 6.3px/12px 'Liberation Sans';color:#111;transform:scaleX(0.9100);transform-origin:100% 50%;-webkit-text-stroke:0.08px #111;">210410</div>
<div class="a t" style="left:573.68px;top:444.50px;font:normal 6.3px/12px 'Liberation Sans';color:#111;transform:scaleX(0.9100);transform-origin:100% 50%;-webkit-text-stroke:0.08px #111;">8</div>
<div class="a t" style="left:581.40px;top:444.50px;font:normal 6.3px/12px 'Liberation Sans';color:#111;transform:scaleX(0.9100);transform-origin:0 50%;-webkit-text-stroke:0.08px #111;">Mendelssohn, War March of the Priests</div>
<div class="a t" style="left:751.00px;top:444.50px;font:normal 6.3px/12px 'Liberation Sans';color:#111;transform:scaleX(0.9100);transform-origin:0 50%;-webkit-text-stroke:0.08px #111;">SMK 47592</div>
<div class="a t" style="left:816.73px;top:444.50px;font:normal 6.3px/12px 'Liberation Sans';color:#111;transform:scaleX(0.9100);transform-origin:100% 50%;-webkit-text-stroke:0.08px #111;">8,99</div>
<div class="a t" style="left:852.13px;top:444.50px;font:normal 6.3px/12px 'Liberation Sans';color:#111;transform:scaleX(0.9100);transform-origin:100% 50%;-webkit-text-stroke:0.08px #111;">71,92</div>
<div class="a t" style="left:262.79px;top:457.00px;font:normal 6.5px/12px 'Liberation Sans';color:#333;transform:scaleX(0.9000);transform-origin:50% 50%;">7</div>
<div class="a t" style="left:274.20px;top:457.00px;font:normal 6.3px/12px 'Liberation Sans';color:#111;transform:scaleX(0.9100);transform-origin:0 50%;-webkit-text-stroke:0.08px #111;">Musikgeschäft Schütz</div>
<div class="a t" style="left:368.75px;top:457.00px;font:normal 6.3px/12px 'Liberation Sans';color:#111;transform:scaleX(0.9100);transform-origin:100% 50%;-webkit-text-stroke:0.08px #111;">11887</div>
<div class="a t" style="left:390.00px;top:457.00px;font:normal 6.3px/12px 'Liberation Sans';color:#111;transform:scaleX(0.9100);transform-origin:0 50%;-webkit-text-stroke:0.08px #111;">Karl Schütz</div>
<div class="a t" style="left:477.08px;top:457.00px;font:normal 6.3px/12px 'Liberation Sans';color:#111;transform:scaleX(0.9100);transform-origin:100% 50%;-webkit-text-stroke:0.08px #111;">536039</div>
<div class="a t" style="left:515.98px;top:457.00px;font:normal 6.3px/12px 'Liberation Sans';color:#111;transform:scaleX(0.9100);transform-origin:100% 50%;-webkit-text-stroke:0.08px #111;">210410</div>
<div class="a t" style="left:570.18px;top:457.00px;font:normal 6.3px/12px 'Liberation Sans';color:#111;transform:scaleX(0.9100);transform-origin:100% 50%;-webkit-text-stroke:0.08px #111;">10</div>
<div class="a t" style="left:581.40px;top:457.00px;font:normal 6.3px/12px 'Liberation Sans';color:#111;transform:scaleX(0.9100);transform-origin:0 50%;-webkit-text-stroke:0.08px #111;">Pizzetti, Messa di Requiem</div>
<div class="a t" style="left:751.00px;top:457.00px;font:normal 6.3px/12px 'Liberation Sans';color:#111;transform:scaleX(0.9100);transform-origin:0 50%;-webkit-text-stroke:0.08px #111;">CHAN 8964</div>
<div class="a t" style="left:816.73px;top:457.00px;font:normal 6.3px/12px 'Liberation Sans';color:#111;transform:scaleX(0.9100);transform-origin:100% 50%;-webkit-text-stroke:0.08px #111;">9,59</div>
<div class="a t" style="left:852.13px;top:457.00px;font:normal 6.3px/12px 'Liberation Sans';color:#111;transform:scaleX(0.9100);transform-origin:100% 50%;-webkit-text-stroke:0.08px #111;">95,90</div>
<div class="a t" style="left:262.79px;top:469.50px;font:normal 6.5px/12px 'Liberation Sans';color:#333;transform:scaleX(0.9000);transform-origin:50% 50%;">8</div>
<div class="a t" style="left:274.20px;top:469.50px;font:normal 6.3px/12px 'Liberation Sans';color:#111;transform:scaleX(0.9100);transform-origin:0 50%;-webkit-text-stroke:0.08px #111;">Musikgeschäft Schütz</div>
<div class="a t" style="left:368.75px;top:469.50px;font:normal 6.3px/12px 'Liberation Sans';color:#111;transform:scaleX(0.9100);transform-origin:100% 50%;-webkit-text-stroke:0.08px #111;">11887</div>
<div class="a t" style="left:390.00px;top:469.50px;font:normal 6.3px/12px 'Liberation Sans';color:#111;transform:scaleX(0.9100);transform-origin:0 50%;-webkit-text-stroke:0.08px #111;">Karl Schütz</div>
<div class="a t" style="left:477.08px;top:469.50px;font:normal 6.3px/12px 'Liberation Sans';color:#111;transform:scaleX(0.9100);transform-origin:100% 50%;-webkit-text-stroke:0.08px #111;">536039</div>
<div class="a t" style="left:515.98px;top:469.50px;font:normal 6.3px/12px 'Liberation Sans';color:#111;transform:scaleX(0.9100);transform-origin:100% 50%;-webkit-text-stroke:0.08px #111;">210410</div>
<div class="a t" style="left:541.20px;top:469.50px;font:normal 6.3px/12px 'Liberation Sans';color:#111;transform:scaleX(0.9100);transform-origin:0 50%;-webkit-text-stroke:0.08px #111;">LP</div>
<div class="a t" style="left:573.68px;top:469.50px;font:normal 6.3px/12px 'Liberation Sans';color:#111;transform:scaleX(0.9100);transform-origin:100% 50%;-webkit-text-stroke:0.08px #111;">6</div>
<div class="a t" style="left:581.40px;top:469.50px;font:normal 6.3px/12px 'Liberation Sans';color:#111;transform:scaleX(0.9100);transform-origin:0 50%;-webkit-text-stroke:0.08px #111;">Versch., Meisterwerke der Trompete</div>
<div class="a t" style="left:751.00px;top:469.50px;font:normal 6.3px/12px 'Liberation Sans';color:#111;transform:scaleX(0.9100);transform-origin:0 50%;-webkit-text-stroke:0.08px #111;">ADA 581087</div>
<div class="a t" style="left:813.23px;top:469.50px;font:normal 6.3px/12px 'Liberation Sans';color:#111;transform:scaleX(0.9100);transform-origin:100% 50%;-webkit-text-stroke:0.08px #111;">10,79</div>
<div class="a t" style="left:852.13px;top:469.50px;font:normal 6.3px/12px 'Liberation Sans';color:#111;transform:scaleX(0.9100);transform-origin:100% 50%;-webkit-text-stroke:0.08px #111;">64,74</div>
<div class="a t" style="left:262.79px;top:482.00px;font:normal 6.5px/12px 'Liberation Sans';color:#333;transform:scaleX(0.9000);transform-origin:50% 50%;">9</div>
<div class="a t" style="left:274.20px;top:482.00px;font:normal 6.3px/12px 'Liberation Sans';color:#111;transform:scaleX(0.9100);transform-origin:0 50%;-webkit-text-stroke:0.08px #111;">Musikgeschäft Schütz</div>
<div class="a t" style="left:368.75px;top:482.00px;font:normal 6.3px/12px 'Liberation Sans';color:#111;transform:scaleX(0.9100);transform-origin:100% 50%;-webkit-text-stroke:0.08px #111;">11887</div>
<div class="a t" style="left:390.00px;top:482.00px;font:normal 6.3px/12px 'Liberation Sans';color:#111;transform:scaleX(0.9100);transform-origin:0 50%;-webkit-text-stroke:0.08px #111;">Karl Schütz</div>
<div class="a t" style="left:477.08px;top:482.00px;font:normal 6.3px/12px 'Liberation Sans';color:#111;transform:scaleX(0.9100);transform-origin:100% 50%;-webkit-text-stroke:0.08px #111;">536039</div>
<div class="a t" style="left:515.98px;top:482.00px;font:normal 6.3px/12px 'Liberation Sans';color:#111;transform:scaleX(0.9100);transform-origin:100% 50%;-webkit-text-stroke:0.08px #111;">210410</div>
<div class="a t" style="left:541.20px;top:482.00px;font:normal 6.3px/12px 'Liberation Sans';color:#111;transform:scaleX(0.9100);transform-origin:0 50%;-webkit-text-stroke:0.08px #111;">DVD</div>
<div class="a t" style="left:573.68px;top:482.00px;font:normal 6.3px/12px 'Liberation Sans';color:#111;transform:scaleX(0.9100);transform-origin:100% 50%;-webkit-text-stroke:0.08px #111;">6</div>
<div class="a t" style="left:581.40px;top:482.00px;font:normal 6.3px/12px 'Liberation Sans';color:#111;transform:scaleX(0.9100);transform-origin:0 50%;-webkit-text-stroke:0.08px #111;">Gershwin, Ein Amerikaner in Paris</div>
<div class="a t" style="left:751.00px;top:482.00px;font:normal 6.3px/12px 'Liberation Sans';color:#111;transform:scaleX(0.9100);transform-origin:0 50%;-webkit-text-stroke:0.08px #111;">ACS 8034</div>
<div class="a t" style="left:816.73px;top:482.00px;font:normal 6.3px/12px 'Liberation Sans';color:#111;transform:scaleX(0.9100);transform-origin:100% 50%;-webkit-text-stroke:0.08px #111;">5,99</div>
<div class="a t" style="left:852.13px;top:482.00px;font:normal 6.3px/12px 'Liberation Sans';color:#111;transform:scaleX(0.9100);transform-origin:100% 50%;-webkit-text-stroke:0.08px #111;">35,94</div>
<div class="a t" style="left:260.98px;top:494.50px;font:normal 6.5px/12px 'Liberation Sans';color:#333;transform:scaleX(0.9000);transform-origin:50% 50%;">10</div>
<div class="a t" style="left:274.20px;top:494.50px;font:normal 6.3px/12px 'Liberation Sans';color:#111;transform:scaleX(0.9100);transform-origin:0 50%;-webkit-text-stroke:0.08px #111;">Haus der Musik</div>
<div class="a t" style="left:368.28px;top:494.50px;font:normal 6.3px/12px 'Liberation Sans';color:#111;transform:scaleX(0.9100);transform-origin:100% 50%;-webkit-text-stroke:0.08px #111;">17959</div>
<div class="a t" style="left:390.00px;top:494.50px;font:normal 6.3px/12px 'Liberation Sans';color:#111;transform:scaleX(0.9100);transform-origin:0 50%;-webkit-text-stroke:0.08px #111;">Martin Manger</div>
<div class="a t" style="left:477.08px;top:494.50px;font:normal 6.3px/12px 'Liberation Sans';color:#111;transform:scaleX(0.9100);transform-origin:100% 50%;-webkit-text-stroke:0.08px #111;">536016</div>
<div class="a t" style="left:519.48px;top:494.50px;font:normal 6.3px/12px 'Liberation Sans';color:#111;transform:scaleX(0.9100);transform-origin:100% 50%;-webkit-text-stroke:0.08px #111;">50410</div>
<div class="a t" style="left:541.20px;top:494.50px;font:normal 6.3px/12px 'Liberation Sans';color:#111;transform:scaleX(0.9100);transform-origin:0 50%;-webkit-text-stroke:0.08px #111;">CD</div>
<div class="a t" style="left:573.68px;top:494.50px;font:normal 6.3px/12px 'Liberation Sans';color:#111;transform:scaleX(0.9100);transform-origin:100% 50%;-webkit-text-stroke:0.08px #111;">6</div>
<div class="a t" style="left:581.40px;top:494.50px;font:normal 6.3px/12px 'Liberation Sans';color:#111;transform:scaleX(0.9100);transform-origin:0 50%;-webkit-text-stroke:0.08px #111;">Stravinsky, Dumbarton Oaks Concerto</div>
<div class="a t" style="left:751.00px;top:494.50px;font:normal 6.3px/12px 'Liberation Sans';color:#111;transform:scaleX(0.9100);transform-origin:0 50%;-webkit-text-stroke:0.08px #111;">SMCD 5120</div>
<div class="a t" style="left:816.73px;top:494.50px;font:normal 6.3px/12px 'Liberation Sans';color:#111;transform:scaleX(0.9100);transform-origin:100% 50%;-webkit-text-stroke:0.08px #111;">8,99</div>
<div class="a t" style="left:852.13px;top:494.50px;font:normal 6.3px/12px 'Liberation Sans';color:#111;transform:scaleX(0.9100);transform-origin:100% 50%;-webkit-text-stroke:0.08px #111;">53,94</div>
<div class="a t" style="left:261.23px;top:507.00px;font:normal 6.5px/12px 'Liberation Sans';color:#333;transform:scaleX(0.9000);transform-origin:50% 50%;">11</div>
<div class="a t" style="left:274.20px;top:507.00px;font:normal 6.3px/12px 'Liberation Sans';color:#111;transform:scaleX(0.9100);transform-origin:0 50%;-webkit-text-stroke:0.08px #111;">Haus der Musik</div>
<div class="a t" style="left:368.28px;top:507.00px;font:normal 6.3px/12px 'Liberation Sans';color:#111;transform:scaleX(0.9100);transform-origin:100% 50%;-webkit-text-stroke:0.08px #111;">17959</div>
<div class="a t" style="left:390.00px;top:507.00px;font:normal 6.3px/12px 'Liberation Sans';color:#111;transform:scaleX(0.9100);transform-origin:0 50%;-webkit-text-stroke:0.08px #111;">Martin Manger</div>
<div class="a t" style="left:477.08px;top:507.00px;font:normal 6.3px/12px 'Liberation Sans';color:#111;transform:scaleX(0.9100);transform-origin:100% 50%;-webkit-text-stroke:0.08px #111;">536016</div>
<div class="a t" style="left:519.48px;top:507.00px;font:normal 6.3px/12px 'Liberation Sans';color:#111;transform:scaleX(0.9100);transform-origin:100% 50%;-webkit-text-stroke:0.08px #111;">50410</div>
<div class="a t" style="left:573.68px;top:507.00px;font:normal 6.3px/12px 'Liberation Sans';color:#111;transform:scaleX(0.9100);transform-origin:100% 50%;-webkit-text-stroke:0.08px #111;">1</div>
<div class="a t" style="left:581.40px;top:507.00px;font:normal 6.3px/12px 'Liberation Sans';color:#111;transform:scaleX(0.9100);transform-origin:0 50%;-webkit-text-stroke:0.08px #111;">Schubert, Sonate in a, D.566</div>
<div class="a t" style="left:751.00px;top:507.00px;font:normal 6.3px/12px 'Liberation Sans';color:#111;transform:scaleX(0.9100);transform-origin:0 50%;-webkit-text-stroke:0.08px #111;">AS-325</div>
<div class="a t" style="left:816.73px;top:507.00px;font:normal 6.3px/12px 'Liberation Sans';color:#111;transform:scaleX(0.9100);transform-origin:100% 50%;-webkit-text-stroke:0.08px #111;">9,00</div>
<div class="a t" style="left:855.63px;top:507.00px;font:normal 6.3px/12px 'Liberation Sans';color:#111;transform:scaleX(0.9100);transform-origin:100% 50%;-webkit-text-stroke:0.08px #111;">9,00</div>
</body></html>
